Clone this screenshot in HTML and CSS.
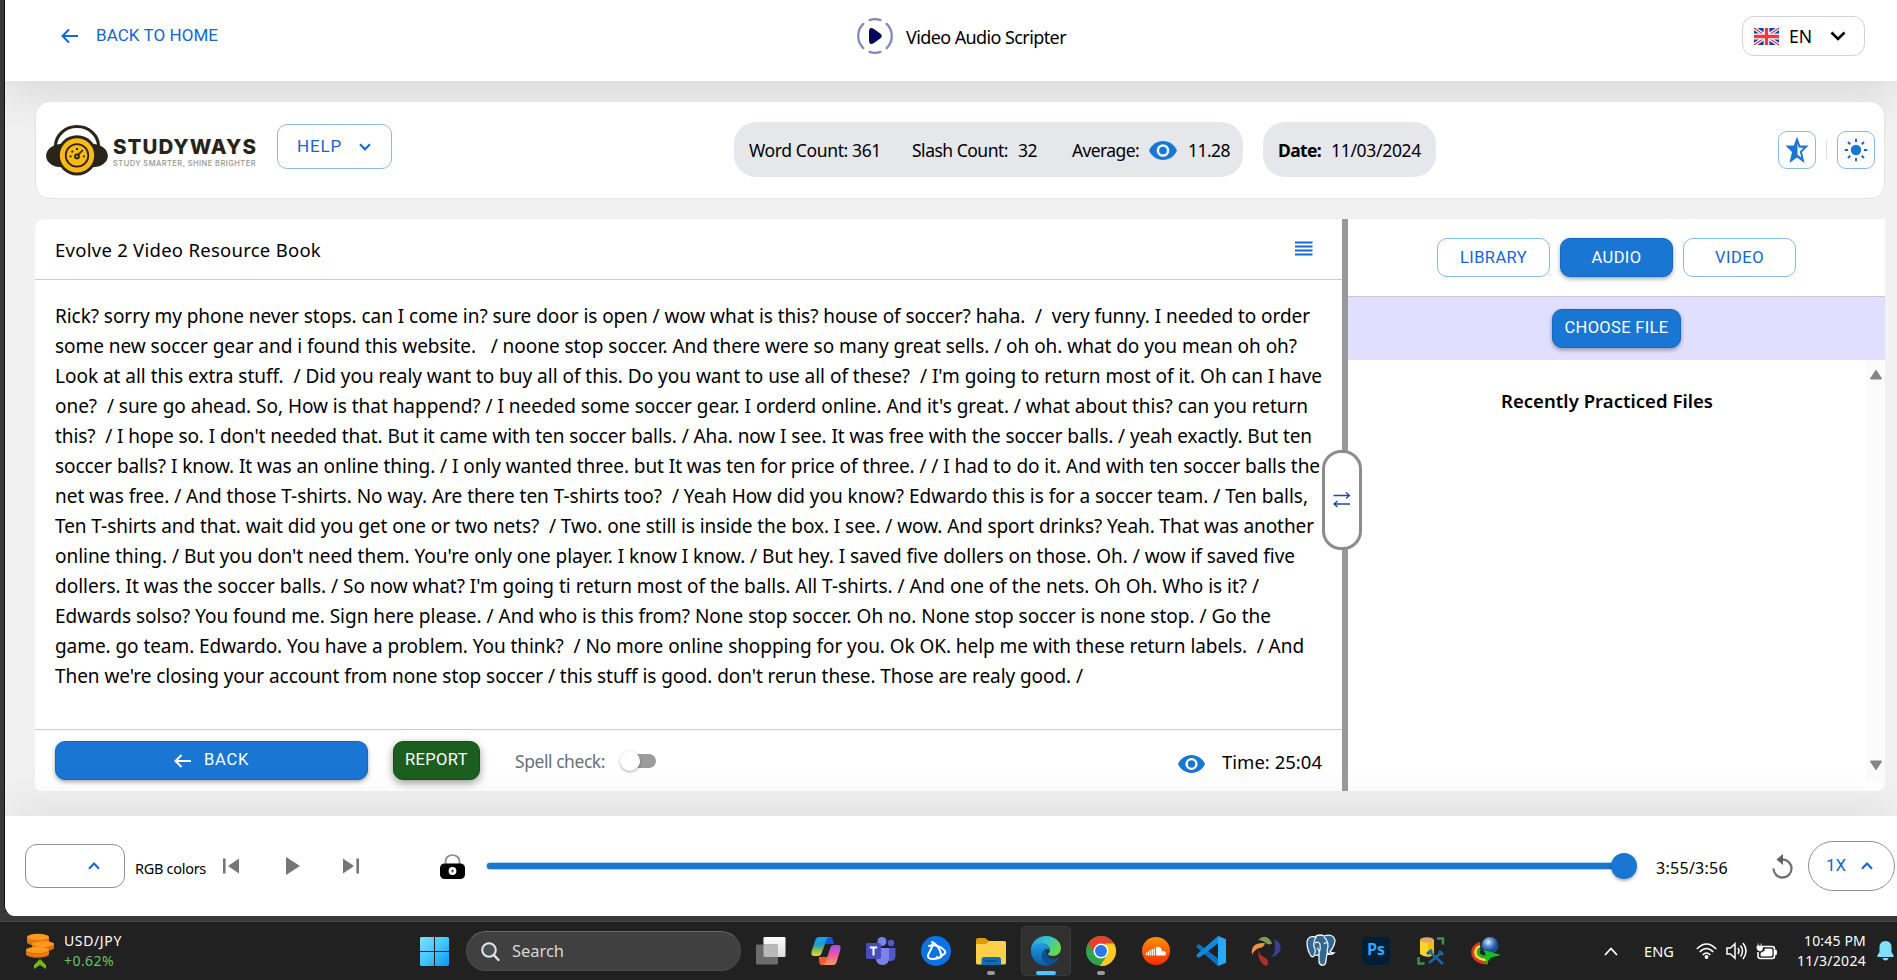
FILE: index.html
```
<!DOCTYPE html>
<html lang="en">
<head>
<meta charset="utf-8">
<title>Video Audio Scripter</title>
<link rel="stylesheet" href="styles.css">
</head>
<body>
<div class="window">
  <header class="header">
    <a class="home-link">
      <svg width="18" height="16" viewBox="0 0 18 16"><path d="M17 8H2M8 1.500 1.500 8 8 14.500" class="stroke-blue"/></svg>
      <span class="btn-text" data-w="122">BACK TO HOME</span>
    </a>
    <div class="app-title">
      <svg width="36" height="36" viewBox="0 0 36 36">
        <circle cx="18" cy="18" r="16.800" fill="none" stroke="#8a85bd" stroke-width="2.300" stroke-linecap="round" pathLength="360" stroke-dasharray="92 25 38 25" stroke-dashoffset="46"/>
        <path d="M12 14c0-4 1.500-5 5-3l5.500 4c3 2 3 4 0 6L17 25c-3.500 2-5 1-5-3z" fill="#06065c"/>
      </svg>
      <span data-w="160">Video Audio Scripter</span>
    </div>
    <div class="lang">
      <svg width="25" height="17" viewBox="0 0 60 40" preserveAspectRatio="none">
        <rect width="60" height="40" fill="#0a3fa8"/>
        <path d="M0 0 60 40M60 0 0 40" stroke="#fff" stroke-width="9"/>
        <path d="M0 0 60 40M60 0 0 40" stroke="#f0364a" stroke-width="3.500"/>
        <path d="M30 0V40M0 20H60" stroke="#fff" stroke-width="14"/>
        <path d="M30 0V40M0 20H60" stroke="#f0364a" stroke-width="8"/>
      </svg>
      <span data-w="23">EN</span>
      <svg class="lang-chevron" width="16" height="10" viewBox="0 0 16 10"><path d="M1.500 1.500 8 8 14.500 1.500" fill="none" stroke="#000" stroke-width="2.600"/></svg>
    </div>
  </header>

  <section class="toolbar">
    <div class="logo">
      <svg width="62" height="51" viewBox="0 0 63 52">
        <path d="M9.500 27V22a22 20.500 0 0 1 44 0v5" fill="none" stroke="#2a251b" stroke-width="3.200"/>
        <path d="M16 19v24C7 43 0 38 0 31.500S6 19.500 16 19zM47 19v24c9 0 16-5 16-11.500S57 19.500 47 19z" fill="#2a251b"/>
        <circle cx="31.500" cy="31" r="20.500" fill="#2a251b"/>
        <circle cx="31.500" cy="31" r="17.500" fill="#f9b916"/>
        <circle cx="31.500" cy="31" r="11.500" fill="none" stroke="#2a251b" stroke-width="1.800"/>
        <circle cx="31.500" cy="32" r="2.900" fill="#2a251b"/><circle cx="31.500" cy="32" r="1" fill="#f9b916"/>
        <path d="M32.500 30.500 37.500 25.500" stroke="#2a251b" stroke-width="1.700"/>
        <path d="M24 32h2M37.500 32h2M26 26.500l1.300 1.200M31.500 23.500v2" stroke="#2a251b" stroke-width="2"/>
      </svg>
      <div class="logo-text">
        <span class="logo-name" data-w="144">STUDYWAYS</span>
        <span class="logo-tag" data-w="143">STUDY SMARTER, SHINE BRIGHTER</span>
      </div>
    </div>
    <button class="help">
      <span class="btn-text" data-w="45">HELP</span>
      <svg width="12" height="8" viewBox="0 0 12 8"><path d="M1 1.200 6 6.300 11 1.200" class="stroke-blue"/></svg>
    </button>
    <div class="stats">
      <span data-w="132">Word Count: 361</span>
      <span class="gap-31" data-w="96">Slash Count:</span>
      <span class="gap-10" data-w="19">32</span>
      <span class="gap-35" data-w="67">Average:</span>
      <svg class="gap-10" width="28" height="19" viewBox="0 0 28 19"><path d="M14 0C8 0 2.500 3.800 0 9.500 2.500 15.200 8 19 14 19s11.500-3.800 14-9.500C25.500 3.800 20 0 14 0z" fill="#1976d2"/><circle cx="14" cy="9.500" r="5.100" fill="none" stroke="#eef2f8" stroke-width="2.500"/></svg>
      <span class="gap-11" data-w="42">11.28</span>
    </div>
    <div class="date">
      <b data-w="43">Date:</b>
      <span class="gap-10" data-w="90">11/03/2024</span>
    </div>
    <div class="tools">
      <button class="tool-btn"><svg width="24" height="28" viewBox="0 0 24 28" preserveAspectRatio="none"><path d="M12 .5 15.200 9.500H23.500L17 16 19.500 27 12 21.500 4.500 27 7 16 .5 9.500H8.800z" fill="#1976d2"/><path d="M12.500 7.500 13.800 11.800H18.500L14.800 15.500 16.300 21.500 12.500 18.800z" fill="#fff"/></svg></button>
      <span class="tool-sep"></span>
      <button class="tool-btn"><svg width="24" height="24" viewBox="0 0 24 24"><circle cx="12" cy="12" r="5.200" fill="#1976d2"/><path d="M12 .8V4M12 20v3.200M.8 12H4M20 12h3.200M4 4l2.200 2.200M17.800 17.800 20 20M20 4l-2.200 2.200M6.200 17.800 4 20" stroke="#1565d8" stroke-width="2"/></svg></button>
    </div>
  </section>

  <main class="main">
    <section class="editor">
      <div class="editor-head">
        <span data-w="266">Evolve 2 Video Resource Book</span>
        <svg width="18" height="16" viewBox="0 0 18 16"><path d="M0 2.500H17.500M0 6.500H17.500M0 10.500H17.500M0 14.500H17.500" stroke="#1266d6" stroke-width="1.900"/></svg>
      </div>
      <div class="script">
        <p data-w="1255">Rick? sorry my phone never stops. can I come in? sure door is open / wow what is this? house of soccer? haha.  /  very funny. I needed to order</p>
        <p data-w="1242">some new soccer gear and i found this website.   / noone stop soccer. And there were so many great sells. / oh oh. what do you mean oh oh?</p>
        <p data-w="1267">Look at all this extra stuff.  / Did you realy want to buy all of this. Do you want to use all of these?  / I'm going to return most of it. Oh can I have</p>
        <p data-w="1253">one?  / sure go ahead. So, How is that happend? / I needed some soccer gear. I orderd online. And it's great. / what about this? can you return</p>
        <p data-w="1257">this?  / I hope so. I don't needed that. But it came with ten soccer balls. / Aha. now I see. It was free with the soccer balls. / yeah exactly. But ten</p>
        <p data-w="1265">soccer balls? I know. It was an online thing. / I only wanted three. but It was ten for price of three. / / I had to do it. And with ten soccer balls the</p>
        <p data-w="1253">net was free. / And those T-shirts. No way. Are there ten T-shirts too?  / Yeah How did you know? Edwardo this is for a soccer team. / Ten balls,</p>
        <p data-w="1259">Ten T-shirts and that. wait did you get one or two nets?  / Two. one still is inside the box. I see. / wow. And sport drinks? Yeah. That was another</p>
        <p data-w="1240">online thing. / But you don't need them. You're only one player. I know I know. / But hey. I saved five dollers on those. Oh. / wow if saved five</p>
        <p data-w="1204">dollers. It was the soccer balls. / So now what? I'm going ti return most of the balls. All T-shirts. / And one of the nets. Oh Oh. Who is it? /</p>
        <p data-w="1216">Edwards solso? You found me. Sign here please. / And who is this from? None stop soccer. Oh no. None stop soccer is none stop. / Go the</p>
        <p data-w="1249">game. go team. Edwardo. You have a problem. You think?  / No more online shopping for you. Ok OK. help me with these return labels.  / And</p>
        <p data-w="1028">Then we're closing your account from none stop soccer / this stuff is good. don't rerun these. Those are realy good. /</p>
      </div>
      <div class="editor-foot">
        <button class="btn-fill back">
          <svg width="18" height="14" viewBox="0 0 18 14"><path d="M17 7H2M7.500 1 1.500 7 7.500 13" fill="none" stroke="#fff" stroke-width="2"/></svg>
          <span class="btn-text" data-w="45">BACK</span>
        </button>
        <button class="btn-fill report"><span class="btn-text" data-w="63">REPORT</span></button>
        <span class="spell" data-w="90">Spell check:</span>
        <span class="toggle"><span class="knob"></span></span>
        <svg class="foot-eye" width="27" height="18" viewBox="0 0 28 19" preserveAspectRatio="none"><path d="M14 0C8 0 2.500 3.800 0 9.500 2.500 15.200 8 19 14 19s11.500-3.800 14-9.500C25.500 3.800 20 0 14 0z" fill="#1976d2"/><circle cx="14" cy="9.500" r="5.100" fill="none" stroke="#fff" stroke-width="2.500"/></svg>
        <span class="time" data-w="100">Time: 25:04</span>
      </div>
    </section>
    <div class="divider">
      <div class="handle"><svg width="18" height="18" viewBox="0 0 18 18"><path d="M.500 4.500H16.500M13 1.500 16.500 4.500 13 7.500M17 13H1M4.500 10 1 13 4.500 16" fill="none" stroke="#22489c" stroke-width="1.300"/></svg></div>
    </div>
    <aside class="side">
      <div class="tabs">
        <button class="tab"><span class="btn-text" data-w="67">LIBRARY</span></button>
        <button class="tab tab-active"><span class="btn-text" data-w="50">AUDIO</span></button>
        <button class="tab"><span class="btn-text" data-w="49">VIDEO</span></button>
      </div>
      <div class="choose"><button class="btn-fill choose-btn"><span class="btn-text" data-w="104">CHOOSE FILE</span></button></div>
      <div class="files">
        <div class="files-body"><span class="files-title" data-w="212">Recently Practiced Files</span></div>
        <div class="scrollbar">
          <svg width="14" height="11" viewBox="0 0 14 11"><path d="M7 .5 13 9.500Q13 10.500 12 10.500H2Q1 10.500 1 9.500z" fill="#858585"/></svg>
          <svg width="14" height="11" viewBox="0 0 14 11"><path d="M7 10.500 13 1.500Q13 .5 12 .5H2Q1 .5 1 1.500z" fill="#858585"/></svg>
        </div>
      </div>
    </aside>
  </main>

  <footer class="player">
    <div class="color-box"><svg width="12" height="8" viewBox="0 0 12 8"><path d="M1 6.800 6 1.500 11 6.800" class="stroke-blue"/></svg></div>
    <span class="rgb" data-w="71">RGB colors</span>
    <svg class="prev" width="16" height="16" viewBox="0 0 16 16"><path d="M0 .5H2.600V15.500H0zM16 .5V15.500L5 8z" fill="#757575"/></svg>
    <svg class="play" width="14" height="18" viewBox="0 0 14 18"><path d="M0 0 14 9 0 18z" fill="#757575"/></svg>
    <svg class="next" width="16" height="16" viewBox="0 0 16 16"><path d="M13.400 .5H16V15.500H13.400zM0 .5V15.500L11 8z" fill="#757575"/></svg>
    <svg class="lock" width="25" height="25" viewBox="0 0 25 25"><path d="M5.500 10V7a7 6 0 0 1 14 0v3" fill="none" stroke="#8a8a8a" stroke-width="1.700"/><rect y="9.500" width="25" height="15.500" rx="4.500" fill="#000"/><circle cx="12.500" cy="17" r="3.900" fill="#fff"/><path d="M12.500 16.500v1" stroke="#555" stroke-width="2.200" stroke-linecap="round"/></svg>
    <div class="slider"><span class="thumb"></span></div>
    <span class="played" data-w="72">3:55/3:56</span>
    <svg class="replay" width="21" height="25" viewBox="0 0 21 25"><path d="M1.500 14.500A9 9 0 1 0 10.500 5.500" fill="none" stroke="#707070" stroke-width="2.300"/><path d="M11 0V11L4.500 5.500z" fill="#606060"/></svg>
    <div class="speed"><span class="btn-text" data-w="20">1X</span><svg width="12" height="8" viewBox="0 0 12 8"><path d="M1 6.800 6 1.500 11 6.800" class="stroke-blue"/></svg></div>
  </footer>
</div>

<div class="taskbar">
  <div class="widget">
    <svg width="28" height="36" viewBox="0 0 28 36">
      <g fill="#d96f0c"><path d="M1 4v5c0 5 22 5 22 0V4z"/><path d="M6 10v5c0 4 22 4 22 0v-5z"/><path d="M0 16v5c0 5 23 5 23 0v-5z"/></g>
      <g fill="#fb9a1e"><ellipse cx="12" cy="4" rx="11" ry="3.300"/><ellipse cx="17" cy="11" rx="11" ry="3"/><ellipse cx="11.500" cy="17" rx="11.500" ry="3.300"/></g>
      <path d="M1 7q11 5 22 0M0 20q11 5 23 0" fill="none" stroke="#f58a10"/>
      <path d="M14 26 20 32v4l-6-4-6 4v-4z" fill="#78b816"/>
    </svg>
    <div class="widget-text"><span data-w="58">USD/JPY</span><span class="gain" data-w="50">+0.62%</span></div>
  </div>
  <svg class="start" width="29" height="29" viewBox="0 0 29 29"><defs><linearGradient id="win" x1="0" y1="0" x2="29" y2="29" gradientUnits="userSpaceOnUse"><stop stop-color="#84dcfb"/><stop offset=".5" stop-color="#42c6fb"/><stop offset="1" stop-color="#0a94f5"/></linearGradient></defs><path d="M1 0H14V14H0V1zM15 0H28L29 1V14H15zM0 15H14V29H1L0 28zM15 15H29V28L28 29H15z" fill="url(#win)"/></svg>
  <div class="search">
    <svg width="19" height="19" viewBox="0 0 19 19"><circle cx="8" cy="8" r="6.800" fill="#4b5054" stroke="#e4e6e8" stroke-width="2"/><path d="M12.800 13 17.500 18" stroke="#e4e6e8" stroke-width="2.400" stroke-linecap="round"/></svg>
    <span data-w="52">Search</span>
  </div>
  <div class="apps">
    <span class="app"><svg width="30" height="30" viewBox="0 0 30 30"><defs><linearGradient id="tv" x2="0" y2="1"><stop stop-color="#fff"/><stop offset="1" stop-color="#dcdcdc"/></linearGradient></defs><rect x="7.500" y="1" width="22" height="20" rx="1" fill="url(#tv)"/><rect x="0" y="8.500" width="22" height="20" rx="1" fill="#6b6b6b"/><path d="M7.500 8.500H22V21H8.500L7.500 20z" fill="#b9b9b9"/></svg></span>
    <span class="app"><svg width="30" height="30" viewBox="0 0 30 30"><defs><linearGradient id="c1" x2="0" y2="1"><stop stop-color="#16a5ee"/><stop offset=".4" stop-color="#2399c8"/><stop offset=".7" stop-color="#7fc05a"/><stop offset="1" stop-color="#fbd02e"/></linearGradient><linearGradient id="c2" x2="0" y2="1"><stop stop-color="#a04cf0"/><stop offset=".5" stop-color="#ee5aa0"/><stop offset="1" stop-color="#fd9a55"/></linearGradient></defs><path d="M20 1h-3l-5 7h11q-1-7-3-7z" fill="#1553d4"/><path d="M10 29h4l5-8H8q0 8 2 8z" fill="#f3592f"/><path d="M8 1h11c-3 0-4 3-5 7l-3 8c-1 4-3 4-6 4H3c-3 0-3-3-2-6L4 5c1-3 2-4 4-4z" fill="url(#c1)"/><path d="M22 29H11c3 0 4-3 5-7l3-9c1-4 3-4 5-4h3c3 0 3 3 2 6l-3 10c-1 3-2 4-4 4z" fill="url(#c2)"/></svg></span>
    <span class="app"><svg width="30" height="28" viewBox="0 0 30 28"><circle cx="16" cy="4.500" r="4.500" fill="#7b83eb"/><circle cx="25" cy="6" r="3.200" fill="#5059c9"/><path d="M21 11h8.500v8q0 5-5 5H21z" fill="#5059c9"/><path d="M10 11h13v10q0 7-6.500 7T10 21z" fill="#7b83eb"/><rect y="6" width="15" height="16" rx="1.500" fill="#464eb8"/><path d="M3.800 10.500h7.400M7.500 10.500v8" stroke="#fff" stroke-width="2"/></svg></span>
    <span class="app"><svg width="30" height="30" viewBox="0 0 30 30"><circle cx="15" cy="15" r="15" fill="#0a74e4"/><g fill="none" stroke="#fff" stroke-width="2" stroke-linecap="round"><path d="M8 10c6-2 13 1 16 5 1 2-1 4-4 4"/><path d="M11 6c4 1 8 7 9 12 0 4-2 5-4 3"/><path d="M21 20c-5 4-14 4-14 0 0-3 4-6 5-13"/></g></svg></span>
    <span class="app open"><svg width="30" height="28" viewBox="0 0 30 28"><path d="M0 3q0-2 2-2h7l4 3H28q2 0 2 2v8H0z" fill="#dd9b0c"/><path d="M0 7h10l3-3h15q2 0 2 2v20q0 1.500-2 1.500H2Q0 27.500 0 26z" fill="#fcd04b"/><path d="M5.500 28v-5q0-3 3-3H22q3 0 3 3v5z" fill="#0f6cbd"/><path d="M9 24h12" stroke="#0b4a85" stroke-width="1.500"/></svg></span>
    <span class="app open active"><svg width="30" height="30" viewBox="0 0 30 30"><defs><linearGradient id="e1" x2="1" y2=".4"><stop stop-color="#2698e0"/><stop offset=".5" stop-color="#34c1d4"/><stop offset="1" stop-color="#63d951"/></linearGradient><linearGradient id="e2" x2="0" y2="1"><stop stop-color="#1b9de2"/><stop offset="1" stop-color="#0c59a4"/></linearGradient></defs><path d="M0 14C0 6 7 0 15 0c9 0 15 6 15 12 0 5-4 8-8 8-3 0-5-1-5-2s2-1 2-4c0-4-5-7-10-6S1 10 0 14z" fill="url(#e1)"/><path d="M0 15C0 10 4 7.500 9 7.500c5.500 0 10 3 10 7-3-3-8 0-8 5 0 4 4 8 9 9.500-10 3.500-20-4-20-14z" fill="url(#e2)"/><path d="M16 12.500c-4 1-6 5-5 8.500 1 5 6 8 9 7.500 3 0 7-4 8-6 0-.6-.5-.7-1-.4-3 1.400-9 1.400-11-3-1-2-1-4.500 0-6.600z" fill="#0f4f96"/></svg></span>
    <span class="app open"><svg width="30" height="30" viewBox="0 0 30 30"><circle cx="15" cy="15" r="15" fill="#2fa24c"/><path d="M2 7.500A15 15 0 0 1 28 7.500H15L9 18z" fill="#e8402f"/><path d="M28 7.500A15 15 0 0 1 14 30L21.500 18.500 19 7.500z" fill="#fdc81f"/><circle cx="15" cy="15" r="7.500" fill="#fff"/><circle cx="15" cy="15" r="6" fill="#2a78ea"/></svg></span>
    <span class="app"><svg width="28" height="28" viewBox="0 0 28 28"><defs><linearGradient id="sc" x2="0" y2="1"><stop stop-color="#ff9100"/><stop offset="1" stop-color="#ff2a00"/></linearGradient></defs><circle cx="14" cy="14" r="14" fill="url(#sc)"/><path d="M14 10q5-1 6 4 4-.5 4 2.500 0 2-3 2h-7z" fill="#fff"/><path d="M12.300 11.500v7M10.300 12v6.500M8.300 13v5.500M6.300 14.500v4M4.500 15.500v2.500" stroke="#fff" stroke-width="1.300"/></svg></span>
    <span class="app"><svg width="30" height="30" viewBox="0 0 30 30"><path d="M22 0 30 3V27L22 30 2 12.500 0 10.500 2.500 8 5 9.500 22 22.500z" fill="#0a6fc0"/><path d="M22 0 2 17.500 0 19.500 2.500 22 5 20.500 22 7.500z" fill="#1188d8"/><path d="M22 0 30 3.500V26.500L22 30z" fill="#29a8f5"/></svg></span>
    <span class="app"><svg width="30" height="30" viewBox="0 0 30 30"><path d="M7 4Q15-4 21 7 21 9 16 8 12 4 7 4z" fill="#7c9e52"/><path d="M23 3Q32 7 29 15 26 20 21 21 26 13 23 3z" fill="#37438e"/><path d="M1 19Q-1 6 14 7 13 12 8 12 3 14 1 19z" fill="#ef9040"/><path d="M7 13Q7 28 16 30q3-6-3-9Q8 19 7 13z" fill="#b32b2d"/></svg></span>
    <span class="app"><svg width="30" height="30" viewBox="0 0 30 30"><path d="M10 1Q2-1 1 6q0 8 4 14 2 2 4-1 3 1 4-1v8q1 4 5 3 2-1 2-5l1-6q5 1 7-1-3 0-4-1 5-7 5-12-2-7-11-4-4-2-8 0z" fill="#336791" stroke="#f3f6fa" stroke-width="1.300"/><path d="M10 1Q6 8 9 13q1 3-1 6M18 1q6 5 3 14 0 3 3 3M13 18q1-4-2-6M9 7q3-2 5 1 1 5-1 9M21 7q-2-1-3 1" fill="none" stroke="#f3f6fa" stroke-width="1.200"/></svg></span>
    <span class="app"><span class="ps">Ps</span></span>
    <span class="app"><svg width="28" height="28" viewBox="0 0 28 28"><path d="M3 3v14q6 5 14 1V3z" fill="#f8d52e"/><path d="M11 5h6v13l-6 2z" fill="#eec008"/><ellipse cx="10" cy="3" rx="7" ry="2.800" fill="#e5a866"/><path d="M20 1.500h6v6M1.500 20v6.500h6" fill="none" stroke="#3f9145" stroke-width="2.500"/><path d="M12 26 25 15M13 15l13 12" stroke="#1766a8" stroke-width="2.600"/><path d="M10 17l5-4M22 14l4 4" stroke="#1766a8" stroke-width="3"/></svg></span>
    <span class="app"><svg width="30" height="28" viewBox="0 0 30 28"><defs><radialGradient id="gl" cx=".4" cy=".3"><stop stop-color="#e4f0fb"/><stop offset=".5" stop-color="#5c92d4"/><stop offset="1" stop-color="#1e4c90"/></radialGradient></defs><g fill="none" stroke-width="3"><path d="M9 6Q0 10 2 18q3 8 15 8" stroke="#e4342a"/><path d="M9 9Q3 12 5 18q3 5 12 5" stroke="#f4df28"/><path d="M9 12Q6 14 8 17.500q3 3 10 2.500" stroke="#26a83a"/></g><circle cx="19" cy="8.500" r="8.500" fill="url(#gl)"/><path d="M13 13 30 18 20 20.500 14 28q2-8-1-15z" fill="#10c41c"/></svg></span>
  </div>
  <div class="tray">
    <svg width="14" height="9" viewBox="0 0 14 9"><path d="M1 8 7 1.500 13 8" fill="none" stroke="#fff" stroke-width="1.800"/></svg>
    <span class="eng" data-w="30">ENG</span>
    <svg class="wifi" width="21" height="16" viewBox="0 0 21 16"><g fill="none" stroke="#fff" stroke-width="1.600"><path d="M.8 6Q10.500-4 20.200 6M3.800 9Q10.500 2 17.200 9M6.700 12Q10.500 8 14.300 12"/></g><circle cx="10.500" cy="14" r="1.900" fill="#fff"/></svg>
    <svg class="speaker" width="21" height="18" viewBox="0 0 21 18"><g fill="none" stroke="#fff" stroke-width="1.500"><path d="M1 6h3.500L9 1.800v14.400L4.500 12H1zM12 6q2 3 0 6M14.500 3.500q4 5.500 0 11M17 1q6 8 0 16"/></g></svg>
    <svg class="battery" width="21" height="17" viewBox="0 0 21 17"><path d="M7 3.500h9q2.500 0 2.500 2.500v7q0 2.500-2.500 2.500H4.500Q2 15.500 2 13V9" fill="none" stroke="#fff" stroke-width="1.600"/><path d="M9 6h6q1 0 1 1v5q0 1-1 1H5V10l4-2zM19 7.500h1.500v4H19zM1 3h5.500v2.500Q6 8 4 8T1 5.500zM2 .5v3M5.200.5v3" fill="#fff" stroke="#fff" stroke-width=".8"/></svg>
    <div class="clock"><span data-w="62">10:45 PM</span><span data-w="69">11/3/2024</span></div>
    <svg width="17" height="20" viewBox="0 0 17 20"><path d="M8.500 0Q14.500 0 14.500 6.500V11l2.200 3.500q.3 1.500-1 1.500H1.300Q0 16 .3 14.500L2.500 11V6.500Q2.500 0 8.500 0zM5.500 17h6q-.5 2.500-3 2.500t-3-2.500z" fill="#7fe0fa"/></svg>
  </div>
</div>
<script src="fit.js"></script>
</body>
</html>
```
FILE: styles.css
```
* { box-sizing: border-box; }
body {
  margin: 0;
  width: 1897px;
  height: 980px;
  overflow: hidden;
  display: flex;
  flex-direction: column;
  background: #393939;
  color: #000;
  font: 18.500px/24px "Noto Sans", "Open Sans", sans-serif;
}
svg { display: block; flex: none; overflow: visible; }
span, b, p { white-space: pre; }
button { font: inherit; padding: 0; background: none; cursor: pointer; }
[data-w] { flex: none; }
.stroke-blue { fill: none; stroke: #1266d6; stroke-width: 2; }
.btn-text { font: 400 17px/20px Roboto, sans-serif; color: #1266d6; }

.window {
  height: 916px;
  margin-left: 4px;
  border-left: 1px solid #0c0c0c;
  background: #f1f1f1;
  display: flex;
  flex-direction: column;
  border-bottom-left-radius: 11px;
  overflow: hidden;
  flex: none;
}

/* Header */
.header {
  height: 81px;
  flex: none;
  background: #fff;
  box-shadow: 0 12px 50px rgba(0, 0, 0, .11);
  padding: 0 32px 9px 56px;
  display: flex;
  align-items: center;
  justify-content: space-between;
}
.home-link { display: flex; align-items: center; gap: 17px; width: 796px; }
.home-link .btn-text { padding-bottom: 2px; }
.app-title { display: flex; align-items: center; gap: 13px; flex: 1; }
.app-title span { font-size: 18px; padding-top: 2px; }
.lang {
  width: 123px;
  height: 40px;
  border: 1px solid #d1d1dc;
  border-radius: 12px;
  display: flex;
  align-items: center;
  padding-left: 11px;
  font-size: 17.500px;
}
.lang span { margin-left: 10px; }
.lang-chevron { margin-left: 18px; }

/* Toolbar */
.toolbar {
  flex: none;
  height: 98px;
  margin: 20px 12px 0 30px;
  background: #fff;
  border: 1px solid #e4e4e4;
  border-radius: 15px;
  display: flex;
  align-items: center;
  padding-left: 10px;
}
.logo { display: flex; gap: 5px; width: 231px; align-items: center; }
.logo-text { display: flex; flex-direction: column; padding-top: 5px; }
.logo-name { font: 800 20.500px/22px Inter, sans-serif; color: #28241c; }
.logo-tag { font: 500 7.500px/10px Inter, sans-serif; color: #949494; margin-top: 1px; }
.help {
  width: 115px;
  height: 45px;
  margin-bottom: 7px;
  border: 1px solid #8cbae8;
  border-radius: 10px;
  display: flex;
  align-items: center;
  justify-content: flex-start;
  gap: 17px;
  padding-left: 19px;
}
.help .btn-text { padding-bottom: 2px; }
.stats, .date {
  height: 55px;
  margin-bottom: 1px;
  border-radius: 22px;
  background: #e5e7eb;
  display: flex;
  align-items: center;
  font-size: 17.500px;
  padding: 1px 0 0 15px;
}
.stats { margin-left: 342px; width: 509px; }
.date { margin-left: 20px; width: 173px; }
.gap-10 { margin-left: 10px; }
.gap-11 { margin-left: 11px; }
.gap-31 { margin-left: 31px; }
.gap-35 { margin-left: 35px; }
.tools { display: flex; align-items: center; margin-left: auto; padding-right: 9px; }
.tool-btn {
  width: 38px;
  height: 38px;
  border: 1px solid #8cbae8;
  border-radius: 9px;
  display: flex;
  align-items: center;
  justify-content: center;
}
.tool-sep { width: 1px; height: 18px; background: #ddd; margin: 0 10px; }

/* Main panes */
.main { flex: none; height: 572px; margin: 20px 12px 0 30px; display: flex; }
.editor {
  width: 1307px;
  background: #fff;
  border-radius: 10px 0 0 6px;
  display: flex;
  flex-direction: column;
}
.editor-head {
  height: 61px;
  border-bottom: 1px solid #ccc;
  display: flex;
  align-items: center;
  justify-content: space-between;
  padding: 1px 29px 0 20px;
}
.editor-head svg { margin-bottom: 3px; }
.script { flex: 1; padding: 21px 0 0 20px; font-size: 19px; }
.script p { margin: 0; line-height: 30px; width: max-content; }
.editor-foot {
  height: 62px;
  border-top: 1px solid #ccc;
  display: flex;
  align-items: center;
  padding: 0 20px 0 20px;
}
.btn-fill {
  height: 39px;
  border: 1px solid #1268c6;
  border-radius: 10px;
  background: #1976d2;
  box-shadow: 0 2px 4px rgba(0, 0, 0, .35);
  display: flex;
  align-items: center;
  justify-content: center;
}
.btn-fill .btn-text { color: #fff; padding-bottom: 2px; }
.editor-foot .btn-text { padding-bottom: 1px; }
.back { width: 313px; gap: 12px; }
.report {
  width: 87px;
  margin-left: 25px;
  background: #1b5e20;
  border-color: #0f5214;
  box-shadow: 0 3px 8px rgba(0, 0, 0, .4);
}
.spell { margin-left: 35px; color: #6b7078; font-size: 17.500px; padding-top: 1px; }
.toggle {
  margin-left: 21px;
  width: 30px;
  height: 14px;
  border-radius: 7px;
  background: #9c9c9c;
  position: relative;
}
.knob {
  position: absolute;
  left: -6px;
  top: -3px;
  width: 20px;
  height: 20px;
  border-radius: 50%;
  background: #fff;
  box-shadow: 0 1px 3px rgba(0, 0, 0, .35);
}
.foot-eye { margin: 6px 17px 0 auto; }
.time { padding-top: 3px; }

.divider { width: 6px; background: #999; position: relative; }
.handle {
  position: absolute;
  left: -20px;
  top: 231px;
  width: 40px;
  height: 100px;
  border: 3px solid #8c8c8c;
  border-radius: 19px;
  background: #fff;
  display: flex;
  align-items: center;
  justify-content: center;
}
.side {
  flex: 1;
  background: #fff;
  border-radius: 0 0 8px 0;
  display: flex;
  flex-direction: column;
}
.tabs {
  height: 78px;
  border-bottom: 1px solid #c9c9d8;
  display: flex;
  align-items: center;
  justify-content: center;
  gap: 10px;
  padding-bottom: 1px;
}
.tab {
  width: 113px;
  height: 39px;
  border: 1px solid #8cbae8;
  border-radius: 10px;
  padding-bottom: 3px;
}
.tab .btn-text, .choose .btn-text, .editor-foot .btn-text { font-size: 16.500px; }
.tab-active { background: #1976d2; border-color: #1268c6; box-shadow: 0 2px 4px rgba(0, 0, 0, .35); }
.tab-active .btn-text { color: #fff; }
.choose {
  height: 63px;
  background: #e0dfff;
  display: flex;
  align-items: center;
  justify-content: center;
}
.choose-btn { width: 129px; }
.files { flex: 1; display: flex; }
.files-body { flex: 1; text-align: center; padding: 29px 0 0 0; }
.files-title { font-weight: 600; }
.scrollbar {
  width: 19px;
  height: 419px;
  background: #fbfbfb;
  display: flex;
  flex-direction: column;
  align-items: center;
  justify-content: space-between;
  padding: 9px 0 8px;
}

/* Player */
.player {
  margin-top: 25px;
  height: 100px;
  flex: none;
  background: #fff;
  box-shadow: 0 -10px 50px rgba(0, 0, 0, .07);
  display: flex;
  align-items: center;
  padding: 0 2px 0 20px;
}
.color-box {
  width: 100px;
  height: 44px;
  border: 1px solid #8f8f8f;
  border-radius: 12px;
  display: flex;
  align-items: center;
  justify-content: flex-end;
  padding-right: 24px;
}
.rgb { margin-left: 10px; font-size: 14.500px; padding-top: 4px; }
.prev { margin-left: 17px; }
.play { margin-left: 47px; }
.next { margin-left: 43px; }
.lock { margin-left: 81px; }
.slider {
  margin-left: 22px;
  width: 1137px;
  height: 6px;
  border-radius: 3px;
  background: #1976d2;
  box-shadow: 0 0 0 .5px #62a6e8;
  position: relative;
}
.thumb {
  position: absolute;
  right: -13px;
  top: -10px;
  width: 26px;
  height: 26px;
  border-radius: 50%;
  background: #1976d2;
  box-shadow: 0 2px 3px rgba(0, 0, 0, .3);
}
.played { margin-left: 32px; font-size: 16px; padding-top: 3px; }
.replay { margin-left: auto; }
.speed {
  margin-left: 15px;
  width: 87px;
  height: 50px;
  border: 1px solid #8f8f8f;
  border-radius: 25px;
  display: flex;
  align-items: center;
  gap: 15px;
  padding-left: 17px;
}
.speed .btn-text { padding-bottom: 2px; }

/* Taskbar */
.taskbar {
  margin-top: 5px;
  height: 59px;
  border-top: 1px solid #464646;
  background: #212121;
  color: #fff;
  display: flex;
  align-items: center;
  font-size: 14px;
  padding-left: 26px;
}
.widget { display: flex; align-items: center; gap: 10px; width: 394px; }
.widget-text { display: flex; flex-direction: column; line-height: 20px; align-items: flex-start; }
.gain { color: #66c466; }
.search {
  margin-left: 17px;
  width: 275px;
  height: 40px;
  border-radius: 20px;
  background: #404040;
  border: 1px solid #4b4b4b;
  border-top-color: #686868;
  display: flex;
  align-items: center;
  gap: 12px;
  padding-left: 14px;
  font-size: 16.500px;
  color: #d8d8d8;
}
.apps { display: flex; gap: 5px; margin-left: 5px; }
.app {
  width: 50px;
  height: 50px;
  display: flex;
  align-items: center;
  justify-content: center;
  border-radius: 5px;
  position: relative;
}
.active { background: #303030; box-shadow: inset 0 0 0 1px #3b3b3b; }
.open::after {
  content: "";
  position: absolute;
  bottom: 1px;
  left: 21px;
  width: 8px;
  height: 4px;
  border-radius: 2px;
  background: #999;
}
.active::after { left: 15px; width: 20px; background: #4cc2ff; }
.ps {
  width: 28px;
  height: 28px;
  border-radius: 5px;
  background: #001e36;
  color: #31a8ff;
  font: 700 16px/25px "Open Sans", sans-serif;
  text-align: center;
}
.tray { display: flex; align-items: center; margin-left: auto; padding-right: 3px; }
.eng { margin-left: 26px; font-size: 14.500px; }
.wifi { margin-left: 22px; }
.speaker { margin-left: 9px; }
.battery { margin-left: 9px; }
.clock {
  width: 89px;
  display: flex;
  flex-direction: column;
  align-items: flex-end;
  line-height: 20px;
  margin-right: 11px;
}
```
FILE: fit.js
```
// Spaces each label's letters so that it fills its nominal width.
document.querySelectorAll('[data-w]').forEach(function (el) {
  var range = document.createRange();
  range.selectNodeContents(el);
  var natural = range.getBoundingClientRect().width;
  el.style.letterSpacing = (el.dataset.w - natural) / el.textContent.length + 'px';
});
```
